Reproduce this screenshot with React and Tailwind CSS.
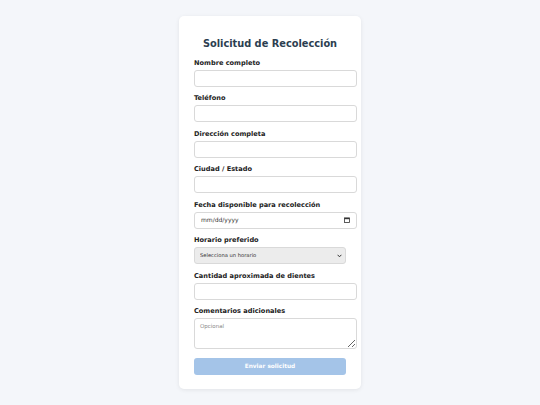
import React from "react";

const font = { fontFamily: '"DejaVu Sans", Verdana, sans-serif' };

function Field({ label, children, mb = "mb-[7.5px]" }) {
  return (
    <div className={mb}>
      <label className="block text-[6.6px] font-bold text-[#222] leading-[8px] mb-[3px]">{label}</label>
      {children}
    </div>
  );
}

const inputCls =
  "block w-[163px] h-[17px] box-border border border-[#d9d9d9] rounded-[3px] bg-white px-[5px] text-[6px] text-[#333] outline-none";

export default function App() {
  return (
    <div className="min-h-[405px] w-[540px] bg-[#f4f6fa] pt-[16px]" style={font}>
      <div className="mx-auto w-[182px] bg-white rounded-[5px] shadow-[0_1px_4px_rgba(0,0,0,0.08)] px-[15px] pt-[21px] pb-[14px]">
        <h1 className="text-center text-[9.8px] font-bold text-[#2c3e50] leading-[13px] mb-[8.5px] whitespace-nowrap">
          Solicitud de Recolección
        </h1>
        <Field label="Nombre completo">
          <input type="text" className={inputCls} />
        </Field>
        <Field label="Teléfono">
          <input type="tel" className={inputCls} />
        </Field>
        <Field label="Dirección completa">
          <input type="text" className={inputCls} />
        </Field>
        <Field label="Ciudad / Estado">
          <input type="text" className={inputCls} />
        </Field>
        <Field label="Fecha disponible para recolección">
          <div className="flex items-center justify-between w-[163px] h-[17px] box-border border border-[#d9d9d9] rounded-[3px] bg-white pl-[6px] pr-[6px]">
            <span className="text-[6px] text-[#333] leading-none">mm/dd/yyyy</span>
            <svg width="6" height="6" viewBox="0 0 6 6">
              <rect x="0.5" y="0.9" width="5" height="4.6" fill="none" stroke="#333" strokeWidth="0.8" />
              <rect x="0.5" y="0.9" width="5" height="1.3" fill="#333" />
            </svg>
          </div>
        </Field>
        <Field label="Horario preferido">
          <div className="relative w-[152px] h-[17px]">
            <select className="appearance-none block w-[152px] h-[17px] border border-[#d9d9d9] rounded-[3px] bg-[#ececec] px-[5px] text-[5.2px] text-[#333] outline-none">
              <option>Selecciona un horario</option>
            </select>
            <svg
              className="absolute right-[4px] top-[7px] pointer-events-none"
              width="5"
              height="4"
              viewBox="0 0 5 4"
            >
              <path d="M0.6 0.8 L2.5 2.8 L4.4 0.8" fill="none" stroke="#333" strokeWidth="1" />
            </svg>
          </div>
        </Field>
        <Field label="Cantidad aproximada de dientes">
          <input type="number" className={inputCls} />
        </Field>
        <Field label="Comentarios adicionales" mb="mb-[9px]">
          <textarea
            placeholder="Opcional"
            className="block w-[163px] h-[31px] box-border border border-[#d9d9d9] rounded-[3px] bg-white px-[5px] py-[3px] text-[5.5px] text-[#333] placeholder:text-[#888] outline-none"
          />
        </Field>
        <button
          disabled
          className="block w-[152px] h-[17px] rounded-[3px] bg-[#a4c4e8] text-white text-[5.8px] font-bold"
        >
          Enviar solicitud
        </button>
      </div>
    </div>
  );
}
